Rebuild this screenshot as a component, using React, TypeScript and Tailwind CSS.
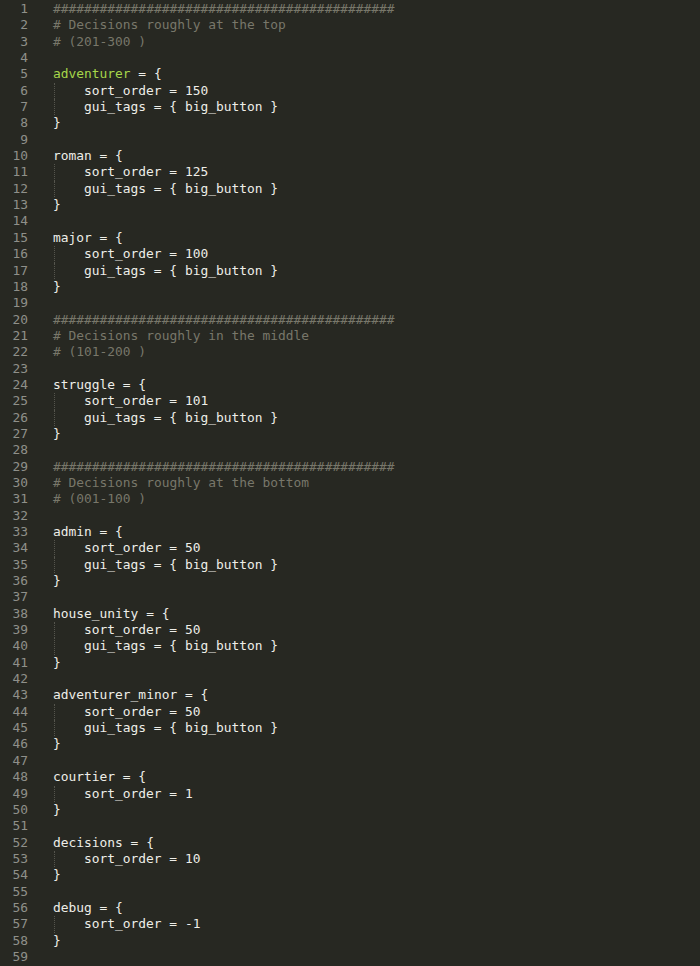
const HASH = "#".repeat(44);

const block = (name: string, order: string, tags = true) => {
  const rows = [`${name} = {`, `    sort_order = ${order}`];
  if (tags) rows.push("    gui_tags = { big_button }");
  rows.push("}", "");
  return rows;
};

const lines: string[] = [
  HASH,
  "# Decisions roughly at the top",
  "# (201-300 )",
  "",
  ...block("adventurer", "150"),
  ...block("roman", "125"),
  ...block("major", "100"),
  HASH,
  "# Decisions roughly in the middle",
  "# (101-200 )",
  "",
  ...block("struggle", "101"),
  HASH,
  "# Decisions roughly at the bottom",
  "# (001-100 )",
  "",
  ...block("admin", "50"),
  ...block("house_unity", "50"),
  ...block("adventurer_minor", "50"),
  ...block("courtier", "1", false),
  ...block("decisions", "10", false),
  ...block("debug", "-1", false),
];

function CodeLine({ text }: { text: string }) {
  if (text.startsWith("#")) {
    return <span className="text-[#78776a]">{text}</span>;
  }
  if (text.startsWith("    ")) {
    return (
      <>
        <span className="w-[31px] self-stretch border-l border-dotted border-[#55554d] ml-[1px] -mr-[1px]" />
        <span>{text.slice(4)}</span>
      </>
    );
  }
  if (text.startsWith("adventurer = ")) {
    return (
      <span>
        <span className="text-[#a6d64a]">adventurer</span>
        {text.slice(10)}
      </span>
    );
  }
  return <span>{text}</span>;
}

export default function App() {
  return (
    <div className="w-[700px] h-[966px] bg-[#272822] overflow-hidden pt-[1px] font-['DejaVu_Sans_Mono',monospace] text-[12.9px] text-[#eeeee8]">
      {lines.map((text, i) => (
        <div key={i} className="flex h-[16.35px] items-stretch leading-[16.35px] whitespace-pre">
          <span className="w-[28px] shrink-0 text-right text-[#8f908a]">{i + 1}</span>
          <div className="ml-[25px] flex items-stretch">
            <CodeLine text={text} />
          </div>
        </div>
      ))}
    </div>
  );
}
